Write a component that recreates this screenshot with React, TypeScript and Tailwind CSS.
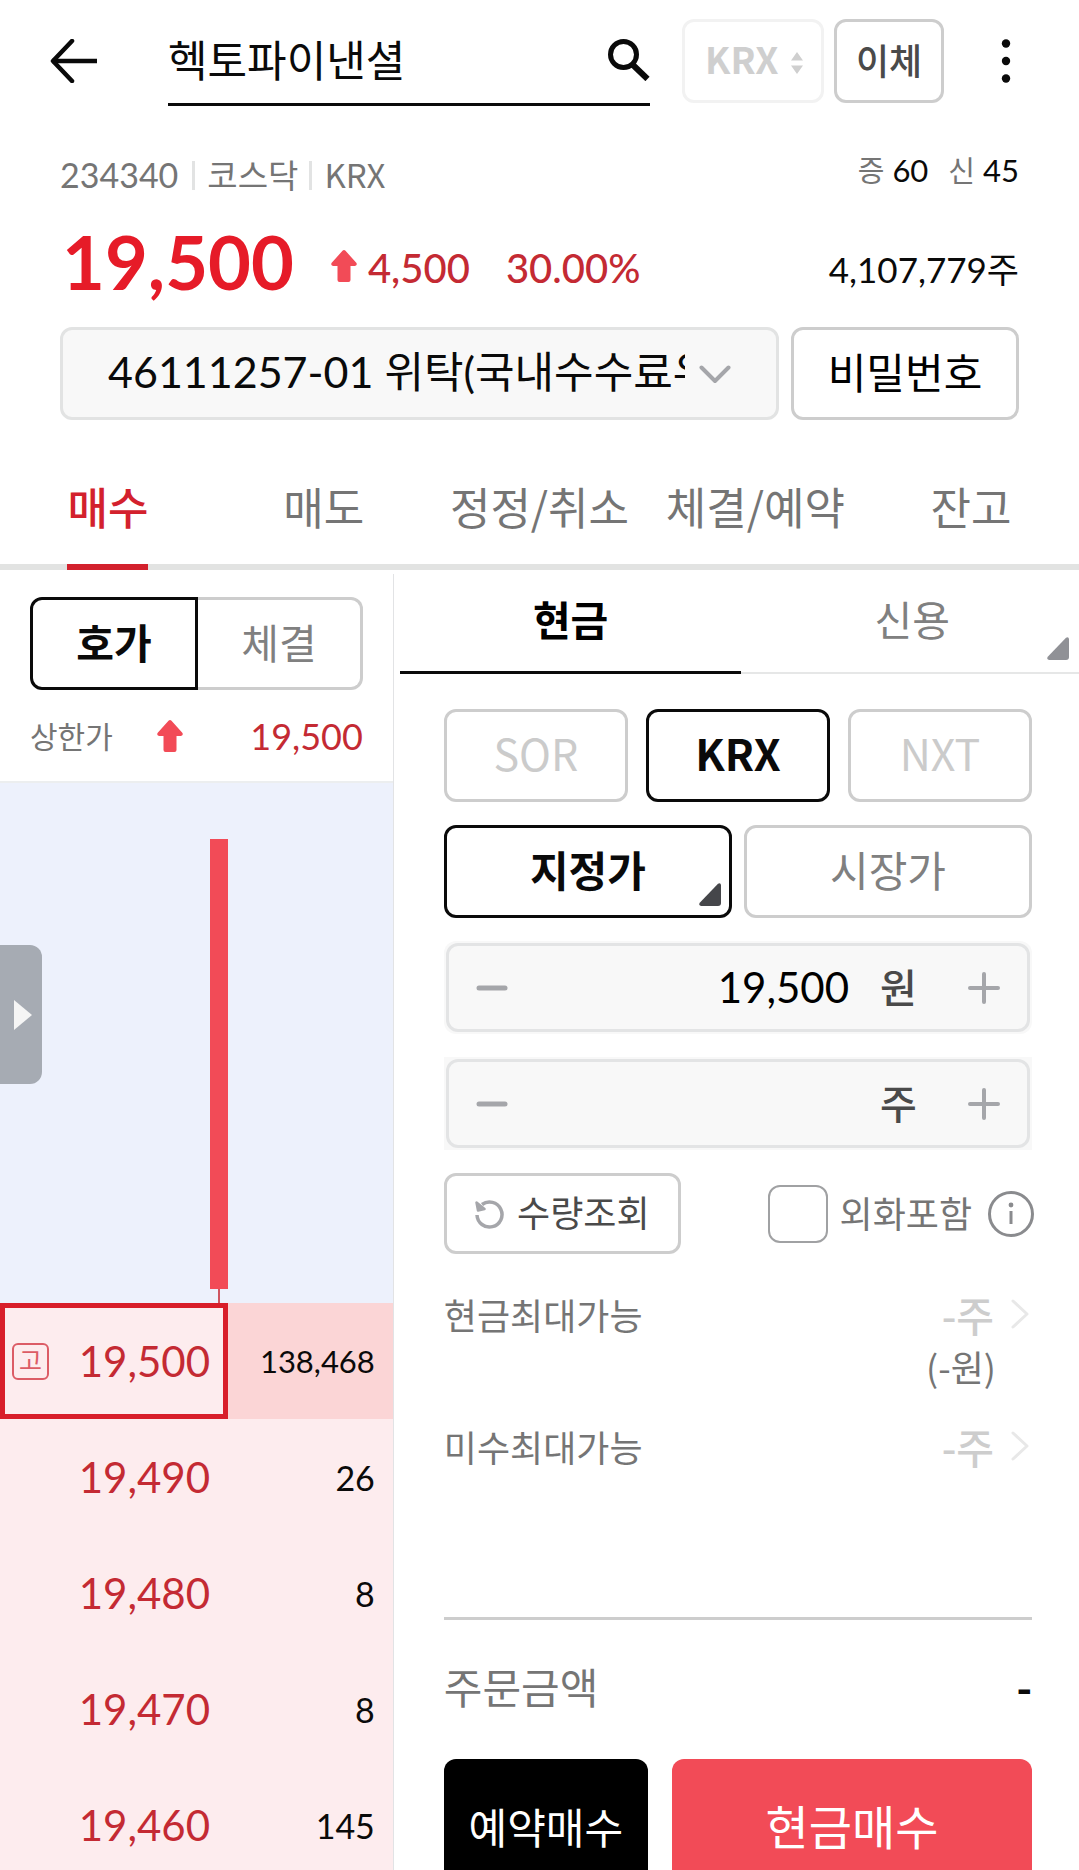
import React, { useState } from 'react';

const TABS = ['매수', '매도', '정정/취소', '체결/예약', '잔고'];

const QUOTES = [
  { price: '19,500', volume: '138,468', current: true },
  { price: '19,490', volume: '26' },
  { price: '19,480', volume: '8' },
  { price: '19,470', volume: '8' },
  { price: '19,460', volume: '145' },
];

const NUM = "font-['Lato','Noto_Sans_CJK_KR',sans-serif]";

const UpArrow = () => (
  <svg width="26" height="32" viewBox="0 0 26 32" fill="#f24b57" className="shrink-0">
    <path d="M11.500 .8 Q13 -.6 14.500 .8 L25.500 13 Q26.500 15.500 24 16 H19.500 V30 Q19.500 32 17.500 32 H8.500 Q6.500 32 6.500 30 V16 H2 Q-.5 15.500 .5 13 Z" />
  </svg>
);

const Corner = ({ className }: { className: string }) => (
  <svg width="22" height="23" viewBox="0 0 22 23" className={className} fill="currentColor">
    <path d="M22 2 V20 Q22 23 19 23 H2 Q-1 22 1 19.500 L19 .8 Q21.500 -.8 22 2 Z" />
  </svg>
);

const ChevronRight = () => (
  <svg width="18" height="30" viewBox="0 0 18 30" fill="none" stroke="#e8e8e8" strokeWidth="3" strokeLinecap="round" strokeLinejoin="round" className="shrink-0">
    <path d="M2 2 L16 15 L2 28" />
  </svg>
);

interface StepperProps {
  label: string;
  unit: string;
  initial: string;
  className?: string;
}

const Stepper: React.FC<StepperProps> = ({ label, unit, initial, className = '' }) => {
  const [value, setValue] = useState(initial);

  return (
    <div className={`p-0.5 bg-[#f8f8f8] ${className}`}>
      <div className="flex items-center h-[89px] rounded-xl border-[3px] border-[#e3e4e5] px-[27px]">
        <button type="button" aria-label={`${label} 감소`} className="shrink-0">
          <svg width="32" height="32" viewBox="0 0 32 32" stroke="#a5a6aa" strokeWidth="5" strokeLinecap="round">
            <path d="M3 16 H29" />
          </svg>
        </button>
        <input
          aria-label={label}
          value={value}
          onChange={(e) => setValue(e.target.value)}
          className={`${NUM} min-w-0 flex-1 bg-transparent pb-0.5 text-right text-[42px] leading-[60px] outline-none`}
        />
        <span className="ml-[31px] w-10 shrink-0 pb-1 text-[40px] leading-[60px] font-medium text-[#4a4a4a]">{unit}</span>
        <button type="button" aria-label={`${label} 증가`} className="ml-12 shrink-0">
          <svg width="32" height="32" viewBox="0 0 32 32" stroke="#a5a6aa" strokeWidth="4" strokeLinecap="round">
            <path d="M2 16 H30 M16 2 V30" />
          </svg>
        </button>
      </div>
    </div>
  );
};

const Header = () => (
  <header className="flex h-[122px] items-center pl-[50px] pr-[65px]">
    <button type="button" aria-label="뒤로" className="shrink-0">
      <svg width="48" height="44" viewBox="0 0 48 44" fill="none" stroke="#0a0a0a" strokeWidth="4.500">
        <path d="M2 22 H47" />
        <path d="M22 2 L3 22 L22 42" strokeLinecap="round" strokeLinejoin="round" />
      </svg>
    </button>
    <div className="ml-[70px] flex h-[90px] min-w-0 flex-1 items-center border-b-[3px] border-[#0a0a0a]">
      <input
        aria-label="종목 검색"
        defaultValue="헥토파이낸셜"
        className="min-w-0 flex-1 bg-transparent pb-1 text-[43px] leading-[60px] text-[#0a0a0a] outline-none"
      />
      <button type="button" aria-label="검색" className="shrink-0">
        <svg width="42" height="42" viewBox="0 0 42 42" fill="none" stroke="#0a0a0a">
          <circle cx="15.500" cy="15.500" r="13" strokeWidth="5" />
          <path d="M25 26 L39.500 40" strokeWidth="6" />
        </svg>
      </button>
    </div>
    <div className="relative ml-8 h-[84px] w-[142px] shrink-0">
      <select
        disabled
        aria-label="거래소"
        className="h-full w-full appearance-none rounded-xl border-[3px] border-[#f2f2f2] pb-1 pl-5 text-[37px] font-bold text-[#cfcfcf] opacity-100"
      >
        <option>KRX</option>
      </select>
      <svg width="12" height="22" viewBox="0 0 12 22" fill="#cfcfcf" className="pointer-events-none absolute right-[21px] top-[33px]">
        <path d="M6 0 L12 8.500 H0 Z M0 13.500 H12 L6 22 Z" />
      </svg>
    </div>
    <button type="button" className="ml-[10px] h-[84px] w-[110px] shrink-0 rounded-xl border-[3px] border-[#cdcdcd] pb-1 text-[36px] font-medium text-[#4a4a4a]">
      이체
    </button>
    <button type="button" aria-label="더보기" className="ml-[54px] shrink-0">
      <svg width="16" height="44" viewBox="0 0 16 44" fill="#0a0a0a">
        <circle cx="8" cy="4.500" r="4.200" />
        <circle cx="8" cy="22" r="4.200" />
        <circle cx="8" cy="39.500" r="4.200" />
      </svg>
    </button>
  </header>
);

const Summary = () => (
  <section className="px-[60px] pt-7">
    <div className="flex h-[50px] items-center justify-between text-[33px] leading-[50px] text-[#757575]">
      <div className="flex items-center">
        <span className={`${NUM} text-[34px]`}>234340</span>
        <i className="ml-[14px] mr-3 h-[29px] w-[3px] bg-[#e2e3e3]" />
        <span className="pb-0.5">코스닥</span>
        <i className="ml-[11px] mr-3 h-[29px] w-[3px] bg-[#e2e3e3]" />
        <span className="pb-0.5">KRX</span>
      </div>
      <div className="mb-[10px] flex items-center text-[29px]">
        <span className="pb-0.5">증</span>
        <span className={`${NUM} ml-2 text-[31px] text-[#0a0a0a]`}>60</span>
        <span className="ml-5 pb-0.5">신</span>
        <span className={`${NUM} ml-2 text-[31px] text-[#0a0a0a]`}>45</span>
      </div>
    </div>
    <div className={`${NUM} mt-[22px] flex h-20 items-center`}>
      <strong className="pl-0.5 text-[74px] leading-[80px] font-bold text-[#e61b28]">19,500</strong>
      <div className="flex flex-1 items-center pt-3 text-[40px] leading-[60px] font-medium text-[#c42a33]">
        <span className="ml-[37px] pb-1">
          <UpArrow />
        </span>
        <span className="ml-[11px]">4,500</span>
        <span className="ml-9">30.00%</span>
        <span className="ml-auto pt-0.5 text-[35px] font-normal text-[#0a0a0a]">4,107,779주</span>
      </div>
    </div>
    <div className="mt-[25px] flex h-[93px] gap-3">
      <div className="relative min-w-0 flex-1">
        <select
          aria-label="계좌"
          className={`${NUM} h-full w-full appearance-none rounded-xl border-[3px] border-[#e2e3e3] bg-[#f8f8f8] pb-0.5 pl-[45px] pr-[91px] text-[43px] text-[#0a0a0a]`}
        >
          <option>46111257-01 위탁(국내수수료우대)</option>
        </select>
        <svg width="32" height="20" viewBox="0 0 32 20" fill="none" stroke="#a5a6aa" strokeWidth="4" strokeLinecap="round" strokeLinejoin="round" className="pointer-events-none absolute right-[48px] top-[38px]">
          <path d="M2.500 2.500 L16 16 L29.500 2.500" />
        </svg>
      </div>
      <button type="button" className="w-[228px] shrink-0 rounded-xl border-[3px] border-[#cdcdcd] pb-1.5 text-[42px]">
        비밀번호
      </button>
    </div>
  </section>
);

const OrderBook = () => {
  const [view, setView] = useState('호가');

  return (
    <section className="flex flex-col border-r border-[#e2e3e5]">
      <div className="mx-[30px] mt-[23px] flex h-[93px] text-[41px]">
        {['호가', '체결'].map((v, i) => (
          <button
            key={v}
            type="button"
            onClick={() => setView(v)}
            className={`flex-1 border-[3px] pb-1 ${i === 0 ? 'rounded-l-xl' : 'rounded-r-xl'} ${
              view === v ? 'border-[#0a0a0a] font-bold text-[#0a0a0a]' : 'border-[#cdcdcd] text-[#808080]'
            } ${view === v ? '' : i === 0 ? 'border-r-0' : 'border-l-0'}`}
          >
            {v}
          </button>
        ))}
      </div>
      <div className="mt-[21px] flex h-[50px] items-center justify-between px-[30px]">
        <span className="w-[127px] pb-0.5 text-[30px] leading-[50px] text-[#757575]">상한가</span>
        <UpArrow />
        <span className={`${NUM} flex-1 text-right text-[36px] leading-[50px] text-[#c42a33]`}>19,500</span>
      </div>
      <div className="mt-5 border-b-2 border-[#eceeef]" />

      <div className="relative h-[520px] shrink-0 bg-[#edf1fc]">
        <button
          type="button"
          aria-label="패널 열기"
          className="absolute left-0 top-[162px] flex h-[139px] w-[42px] items-center justify-center rounded-r-xl bg-[#a6abb3] pl-1"
        >
          <svg width="18" height="30" viewBox="0 0 18 30" fill="#f5f5f5">
            <path d="M0 0 L18 15 L0 30 Z" />
          </svg>
        </button>
        <div className="absolute left-[210px] top-[56px] h-[450px] w-[18px] bg-[#f24b57]" />
        <div className="absolute bottom-0 left-[218px] h-[14px] w-0.5 bg-[#cf5560]" />
      </div>

      <table className={`${NUM} w-full table-fixed border-collapse`}>
        <tbody>
          {QUOTES.map((q) => (
            <tr key={q.price} className="h-[116px] bg-[#fdecee]">
              <td className="w-[228px] p-0">
                <div className={`flex h-[116px] items-center ${q.current ? 'border-[5px] border-[#d81e2a] pl-[7px] pr-[13px]' : 'px-[18px]'}`}>
                  {q.current && (
                    <span className="flex size-[37px] items-center justify-center rounded-md border-2 border-[#dc5c66] pb-0.5 text-[25px] leading-[30px] text-[#dc5c66]">
                      고
                    </span>
                  )}
                  <span className="ml-auto text-[42px] leading-[60px] text-[#c42a33]">{q.price}</span>
                </div>
              </td>
              {/* long volumes drop a size so they stay inside the cell */}
              <td
                className={`p-0 pr-[18px] text-right text-[#0a0a0a] ${q.volume.length > 6 ? 'text-[31px]' : 'text-[34px]'} ${
                  q.current ? 'bg-[#fbd5d6]' : ''
                }`}
              >
                {q.volume}
              </td>
            </tr>
          ))}
        </tbody>
      </table>
    </section>
  );
};

const Limit = ({ label, won }: { label: string; won?: string }) => (
  <div className="flex items-start justify-between text-[36px] leading-[52px] text-[#757575]">
    <span>{label}</span>
    <div className="text-right">
      <button type="button" className="ml-auto flex items-center gap-[17px] pr-[3px] text-[41px] leading-[52px] font-medium text-[#cdcdcd]">
        -주
        <ChevronRight />
      </button>
      {won && <div className="pr-9">{won}</div>}
    </div>
  </div>
);

const OrderForm = () => {
  const [foreign, setForeign] = useState(false);
  const plain = 'border-[#cdcdcd]';
  const active = 'border-[#0a0a0a] font-bold text-[#0a0a0a]';

  return (
    <form className="min-w-0" onSubmit={(e) => e.preventDefault()}>
      <div className="-mr-1 ml-1.5 flex h-[100px] text-[41px]">
        <button type="button" className="flex-1 border-b-[3px] border-[#0a0a0a] pb-2 font-bold">
          현금
        </button>
        <button type="button" className="relative flex-1 border-b-2 border-[#e6e7e7] pb-2 text-[#808080]">
          신용
          <Corner className="absolute bottom-3 right-[14px] text-[#909196]" />
        </button>
      </div>

      <div className="pl-[50px] pr-[47px] pt-[35px]">
        <div className="flex h-[93px] gap-[18px] text-[43px]">
          <button type="button" disabled className={`flex-1 rounded-xl border-[3px] pb-1.5 text-[#cbcbcb] ${plain}`}>SOR</button>
          <button type="button" className={`flex-1 rounded-xl border-[3px] pb-1.5 ${active}`}>KRX</button>
          <button type="button" disabled className={`flex-1 rounded-xl border-[3px] pb-1.5 text-[#cbcbcb] ${plain}`}>NXT</button>
        </div>
        <div className="mt-[23px] flex h-[93px] gap-3 text-[42px]">
          <button type="button" className={`relative flex-1 rounded-xl border-[3px] pb-1.5 ${active}`}>
            지정가
            <Corner className="absolute bottom-[9px] right-2 text-[#45464a]" />
          </button>
          <button type="button" className={`flex-1 rounded-xl border-[3px] pb-1.5 text-[#808080] ${plain}`}>시장가</button>
        </div>
        <Stepper label="가격" unit="원" initial="19,500" className="mt-[23px] rounded-xl" />
        <Stepper label="수량" unit="주" initial="" className="mt-[23px]" />

        <div className="mt-[23px] flex h-[81px] items-center text-[36px]">
          <button type="button" className="flex h-full w-[237px] items-center justify-center gap-3 rounded-xl border-[3px] border-[#cdcdcd] text-[#4a4a4a]">
            <svg width="30" height="30" viewBox="0 0 30 30" fill="none" stroke="#a5a6aa" strokeWidth="3.500">
              <path d="M2 16 A12.500 12.500 0 1 0 7 5.500" />
              <path d="M1.500 3.500 L3 11.500 L9.500 10 Z" fill="#a5a6aa" strokeWidth="2.500" strokeLinejoin="round" />
            </svg>
            <span className="pb-1.5">수량조회</span>
          </button>
          <input
            id="foreign"
            type="checkbox"
            checked={foreign}
            onChange={(e) => setForeign(e.target.checked)}
            className="ml-auto h-[58px] w-[60px] appearance-none rounded-xl border-2 border-[#a0a1a3] checked:bg-[#a0a1a3]"
          />
          <label htmlFor="foreign" className="ml-3 pb-1 text-[#757575]">외화포함</label>
          <button type="button" aria-label="안내" className="-mr-0.5 ml-4">
            <svg width="46" height="46" viewBox="0 0 46 46" fill="none" stroke="#8a8b8e" strokeWidth="3">
              <circle cx="23" cy="23" r="21.500" />
              <path d="M23 20 V33" />
              <circle cx="23" cy="14" r="2.400" fill="#8a8b8e" stroke="none" />
            </svg>
          </button>
        </div>

        <div className="mt-[34px] h-[332px] border-b-[3px] border-[#cdcdcd]">
          <Limit label="현금최대가능" won="(-원)" />
          <div className="mt-7">
            <Limit label="미수최대가능" />
          </div>
        </div>
        <div className="mt-9 flex h-[60px] items-center justify-between text-[42px] leading-[60px]">
          <span className="text-[#757575]">주문금액</span>
          <span className="font-bold text-[#0a0a0a]">-</span>
        </div>
      </div>

      <div className="mt-[43px] flex h-[132px] gap-6 pl-[50px] pr-[47px] text-white">
        <button type="button" className="w-[204px] rounded-xl bg-black text-[42px]">예약매수</button>
        <button type="submit" className="flex-1 rounded-xl bg-[#f24b57] text-[47px]">현금매수</button>
      </div>
    </form>
  );
};

const App: React.FC = () => {
  const [tab, setTab] = useState('매수');

  return (
    <div className="flex h-screen flex-col overflow-hidden bg-white font-['Noto_Sans_CJK_KR',sans-serif] text-black">
      <Header />
      <Summary />
      <nav className="grid h-[150px] shrink-0 grid-cols-5 border-b-[6px] border-[#e2e3e2] text-[44px]">
        {TABS.map((t) => (
          <button
            key={t}
            type="button"
            onClick={() => setTab(t)}
            className={`flex h-[150px] justify-center whitespace-nowrap ${tab === t ? 'font-medium text-[#d3212d]' : 'text-[#757575]'}`}
          >
            <span className={`flex h-full items-center pt-7 ${tab === t ? 'border-b-[6px] border-[#d3212d]' : 'pb-1.5'}`}>{t}</span>
          </button>
        ))}
      </nav>
      <main className="mt-1 grid min-h-0 flex-1 grid-cols-[36.5%_1fr]">
        <OrderBook />
        <OrderForm />
      </main>
    </div>
  );
};

export default App;
